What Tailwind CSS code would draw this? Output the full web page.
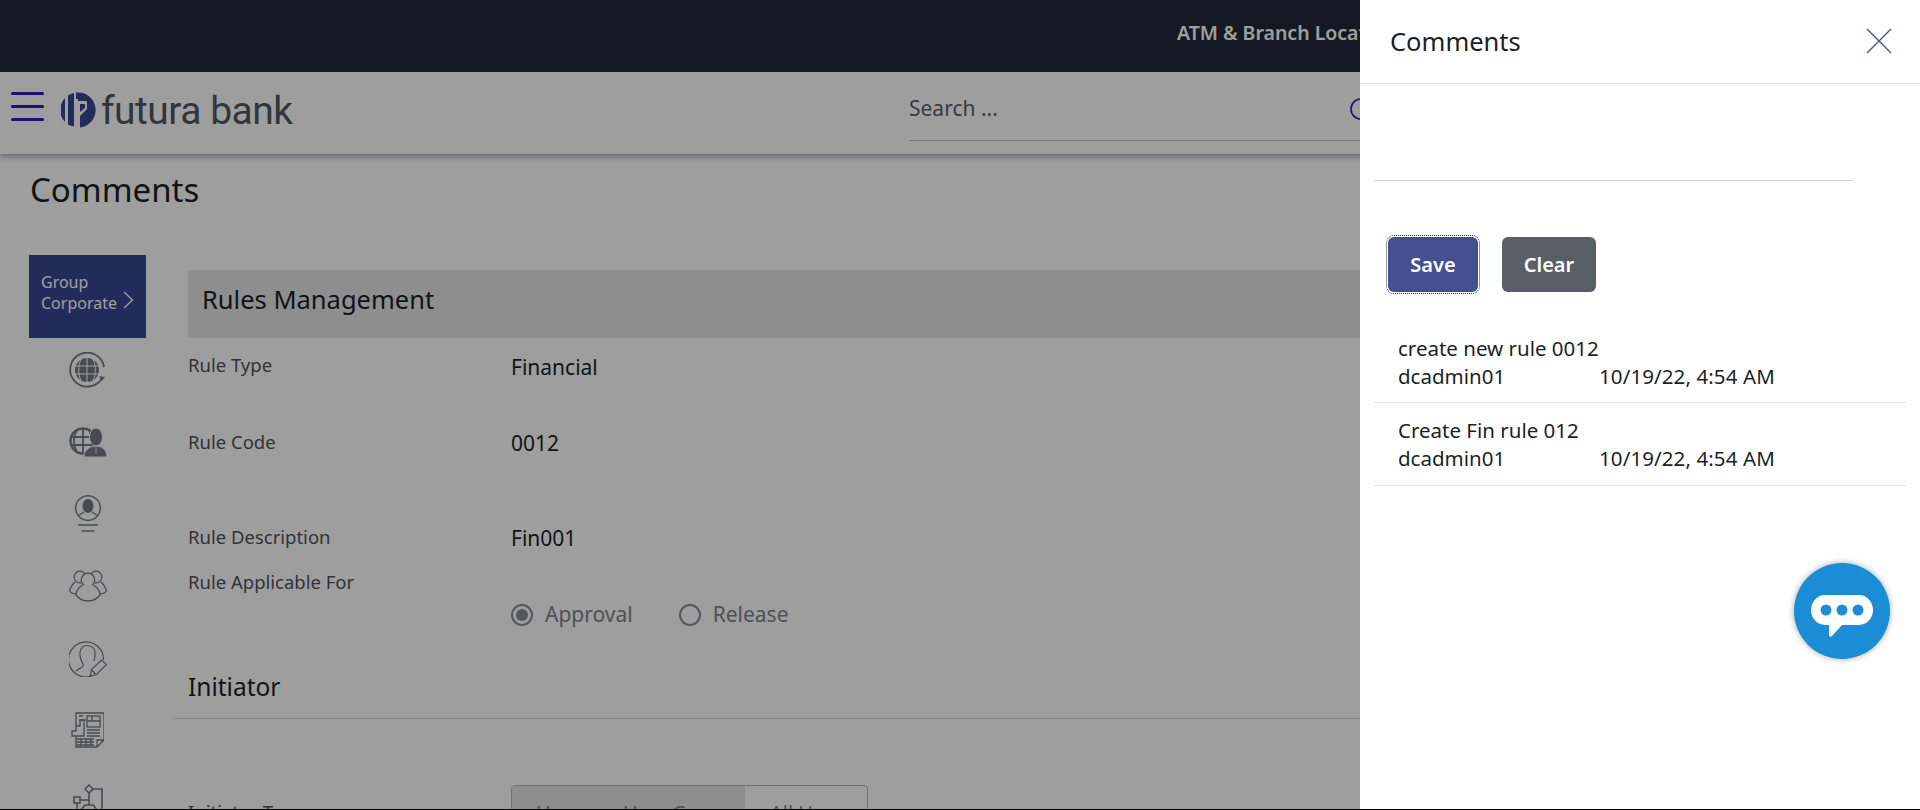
<!DOCTYPE html>
<html lang="en">
<head>
    <meta charset="UTF-8">
    <title>Comments</title>
    <script src="https://cdn.jsdelivr.net/npm/@tailwindcss/browser@4"></script>
</head>
<body class="h-[810px] overflow-hidden bg-black text-[#1b1f27] font-['Noto_Sans',sans-serif]">
    <div class="relative h-[809px] overflow-hidden bg-white">

        <!-- Top bar -->
        <div class="h-[72px] bg-[#222837] pl-[1177px] flex items-center">
            <span class="text-[19.5px] font-semibold text-white whitespace-nowrap pb-[6px]">ATM &amp; Branch Locator</span>
        </div>

        <!-- Header -->
        <div class="h-[82px] bg-white flex items-center shadow-[0_3px_6px_rgba(40,40,70,0.4)] relative">
            <div class="w-[909px] shrink-0 flex items-center pb-[6px]">
                <button class="ml-[11px] flex flex-col gap-[10px] w-[33px] mb-[8px]">
                    <span class="h-[3px] bg-[#2f1db4] rounded-full"></span>
                    <span class="h-[3px] bg-[#2f1db4] rounded-full"></span>
                    <span class="h-[3px] bg-[#2f1db4] rounded-full"></span>
                </button>
                <svg class="ml-[17px] w-[36px] h-[36px]" viewBox="0 0 36 36">
                    <path fill="#384791" d="M4 6 A17.500 17.500 0 0 0 4 30 Z"/>
                    <path fill="#384791" d="M7 3.500 A17.500 17.500 0 0 1 13 1 V34.500 A17.500 17.500 0 0 1 7 32.500 Z"/>
                    <path fill="#384791" fill-rule="evenodd" d="M15 0.500 A17.500 17.500 0 1 1 19 35.500 V24 L26 17 V9 H17 V7 H15 Z M19 12 H24 V16 L19 20 Z"/>
                </svg>
                <span class="ml-[4px] mt-[2px] text-[39px] leading-none text-[#52575f] tracking-[-0.5px] font-['Roboto',sans-serif] whitespace-nowrap">futura bank</span>
            </div>
            <div class="w-[560px] h-[68px] border-b border-[#c6c6c6] flex items-center mb-[12px]">
                <span class="w-[441px] text-[21px] text-[#5d616a] pt-[4px]">Search ...</span>
                <svg class="w-[22px] h-[22px] mt-[4px]" viewBox="0 0 22 22" fill="none" stroke="#2f1db4" stroke-width="1.6"><circle cx="11" cy="11" r="10"/></svg>
            </div>
        </div>

        <!-- Page title -->
        <div class="h-[68px] bg-white pl-[30px] pt-[13px]">
            <h1 class="text-[33px] leading-[46px]">Comments</h1>
        </div>

        <!-- Body -->
        <div class="flex bg-white pt-[33px]">
            <!-- Side menu -->
            <div class="w-[188px] shrink-0 pl-[29px]">
                <div class="w-[117px] h-[83px] bg-[#384791] text-white text-[16px] leading-[21px] pl-[12px] pb-[8px] flex items-center">
                    <div>
                        <div>Group</div>
                        <div class="flex items-center gap-[6px] h-[21px]">Corporate
                            <svg class="w-[11px] h-[18px] mb-[6px]" viewBox="0 0 11 18" fill="none" stroke="white" stroke-width="1.3"><path d="M1 1 9.500 9 1 17"/></svg>
                        </div>
                    </div>
                </div>
                <div class="w-[117px] flex flex-col items-center text-[#777a82] mt-[-4px]">
                    <!-- globe refresh -->
                    <div class="h-[72px] flex items-center justify-center">
                        <svg class="w-[38px] h-[36px]" viewBox="0 0 38 36" fill="none" stroke="currentColor">
                            <path stroke-width="1.800" d="M33 26 A17 17 0 1 1 35 15"/>
                            <circle cx="18" cy="18" r="12" fill="currentColor" stroke="none"/>
                            <path stroke="white" stroke-width="1" d="M6 14H30M6 22H30M18 6V30M12 7C9 14 9 22 12 29M24 7C27 14 27 22 24 29"/>
                            <path d="M30 24l6 1-3 4z" fill="currentColor" stroke="none"/>
                        </svg>
                    </div>
                    <!-- globe user -->
                    <div class="h-[72px] flex items-center justify-center">
                        <svg class="w-[38px] h-[30px]" viewBox="0 0 38 30" fill="none" stroke="currentColor">
                            <circle cx="14" cy="14" r="12.500" stroke-width="2.400"/>
                            <path stroke-width="1.800" d="M1 10H26M1 18H26M14 1V27M8 3C4 10 4 18 8 25M20 3C24 10 24 18 20 25"/>
                            <ellipse cx="27" cy="10" rx="6.500" ry="9" fill="currentColor" stroke="white" stroke-width="1"/>
                            <path d="M15 30C15 22 22 19 27 19S38 22 38 30Z" fill="currentColor" stroke="white" stroke-width="1"/>
                            <path d="M27 20V27" stroke="white" stroke-width="0.800"/>
                        </svg>
                    </div>
                    <!-- user badge -->
                    <div class="h-[72px] flex items-center justify-center">
                        <svg class="w-[28px] h-[38px]" viewBox="0 0 28 38" fill="none" stroke="currentColor" stroke-width="1.400">
                            <circle cx="14" cy="13" r="12.300"/>
                            <ellipse cx="14" cy="11" rx="5.500" ry="7" fill="currentColor" stroke="none"/>
                            <path d="M4 21 10 17M24 21 18 17"/>
                            <path d="M4 30H24M7.500 36H20.500"/>
                        </svg>
                    </div>
                    <!-- users -->
                    <div class="h-[72px] flex items-center justify-center">
                        <svg class="w-[38px] h-[32px]" viewBox="0 0 38 32" fill="none" stroke="currentColor" stroke-width="1.300">
                            <circle cx="11" cy="7" r="5.800"/>
                            <circle cx="27" cy="7" r="5.800"/>
                            <path d="M6 12C3 15 1 18 0.700 21 2 23 5 24 8 24M32 12C35 15 37 18 37.300 21 36 23 33 24 30 24"/>
                            <circle cx="19" cy="10" r="6.800" fill="white"/>
                            <path d="M13.500 15C9 18 7 21 7 25 10 29 14 31 19 31S28 29 31 25C31 21 29 18 24.500 15" fill="white"/>
                        </svg>
                    </div>
                    <!-- user edit -->
                    <div class="h-[72px] flex items-center justify-center">
                        <svg class="w-[38px] h-[37px]" viewBox="0 0 38 37" fill="none" stroke="currentColor" stroke-width="1.200">
                            <path d="M24 35.500A17.500 17.500 0 1 1 34.500 20"/>
                            <path d="M7 31C10 28 14 28 14.500 25 12 21 10.500 17 11 12 12 7 15 5.500 18 5.500S25 7 26 12C26.500 15 26 18 25 21"/>
                            <path d="M21 36 22.500 29.500 32.500 20 37.500 24.500 27.500 34.500Z"/>
                            <path d="M22.500 30 27 34.500"/>
                        </svg>
                    </div>
                    <!-- report -->
                    <div class="h-[72px] flex items-center justify-center">
                        <svg class="w-[33px] h-[36px]" viewBox="0 0 33 36" fill="none" stroke="currentColor" stroke-width="1.300">
                            <path d="M5 14V1H33V28L26 35H5V24"/>
                            <path d="M26 35V28H33"/>
                            <path d="M8 4H12M8 8H15"/>
                            <rect x="16" y="4" width="13" height="11"/>
                            <path d="M16 9H29M21 4V9"/>
                            <path d="M1 24V19H5V14H9V8H13V24Z"/>
                            <path d="M16 18H29M16 21H29M16 24H29M5 27H23M5 30H23M5 33H23M10 27V34M15 27V34M20 27V34"/>
                        </svg>
                    </div>
                    <!-- flow -->
                    <div class="h-[72px] flex items-start justify-center pt-[18px]">
                        <svg class="w-[30px] h-[36px]" viewBox="0 0 30 36" fill="none" stroke="currentColor" stroke-width="1.600">
                            <path d="M16 1 20 5 16 9 12 5Z"/>
                            <path d="M20 5H29V26H24"/>
                            <path d="M16 9V21"/>
                            <rect x="1" y="13" width="6" height="6"/>
                            <path d="M7 16H16M4 19V26H10"/>
                            <path d="M12 21H20L24 26 20 31H12L8 26Z"/>
                        </svg>
                    </div>
                </div>
            </div>

            <!-- Content -->
            <div class="flex-1 pt-[15px]">
                <div class="h-[68px] bg-[#e6e6e6] flex items-center pl-[14px] pb-[9px] text-[25.5px]">Rules Management</div>
                <div class="grid grid-cols-[323px_1fr] text-[#4f535b] text-[18.5px] mt-[15px]">
                    <div class="h-[77px] leading-[24px]">Rule Type</div>
                    <div class="h-[77px] text-[21px] leading-[28px] text-[#1b1f27]">Financial</div>
                    <div class="h-[95px] leading-[24px]">Rule Code</div>
                    <div class="h-[95px] text-[21px] leading-[26px] text-[#1b1f27]">0012</div>
                    <div class="h-[45px] leading-[24px]">Rule Description</div>
                    <div class="h-[45px] text-[21px] leading-[26px] text-[#1b1f27]">Fin001</div>
                    <div class="leading-[24px]">Rule Applicable For</div>
                    <div class="pt-[26px] flex items-center gap-[46px] text-[21px] text-[#7f838a] h-[64px]">
                        <label class="flex items-center gap-[12px]">
                            <span class="w-[22px] h-[22px] rounded-full border-2 border-[#8a8d94] flex items-center justify-center"><span class="w-[12px] h-[12px] rounded-full bg-[#8a8d94]"></span></span>
                            Approval
                        </label>
                        <label class="flex items-center gap-[12px]">
                            <span class="w-[22px] h-[22px] rounded-full border-2 border-[#8a8d94]"></span>
                            Release
                        </label>
                    </div>
                </div>
                <div class="ml-[-15px] mt-[36px] h-[49px] border-b border-[#dcdcdc] pl-[15px] text-[24.5px] leading-[34px]">Initiator</div>
                <div class="grid grid-cols-[323px_1fr] mt-[66px]">
                    <div class="text-[18.5px] leading-[24px] pt-[15px] text-[#4f535b]">Initiator Type</div>
                    <div class="w-[357px] h-[50px] border border-[#b8b8b8] rounded-[4px] flex text-[20px] leading-[28px] text-[#7f838a] overflow-hidden">
                        <span class="w-[233px] bg-[#e6e6e6] flex pt-[13px] pl-[24px]"><span class="w-[87px]">User</span><span>User Group</span></span>
                        <span class="flex-1 pt-[13px] pl-[25px]">All Users</span>
                    </div>
                </div>
            </div>
        </div>

        <!-- Dim overlay behind the panel -->
        <div class="absolute inset-0 bg-black/[0.38]"></div>

        <!-- Comments panel -->
        <aside class="absolute top-0 right-0 bottom-0 w-[560px] bg-white">
            <div class="h-[84px] border-b border-[#e4e4e4] flex items-center justify-between pl-[30px] pr-[28px]">
                <h2 class="text-[25.5px] leading-[34px] pb-[2px]">Comments</h2>
                <svg class="w-[26px] h-[26px] mb-[2px]" viewBox="0 0 26 26" fill="none" stroke="#445190" stroke-width="1.300"><path d="M1 1 25 25M25 1 1 25"/></svg>
            </div>
            <div class="ml-[14px] w-[480px] h-[97px] border-b border-[#d8d8d8]"></div>
            <div class="flex gap-[24px] pl-[28px] mt-[56px]">
                <button class="w-[90px] h-[55px] rounded-[6px] bg-[#445190] text-white text-[20px] font-semibold outline-1 outline-dotted outline-offset-1 outline-[#333]">Save</button>
                <button class="w-[94px] h-[55px] rounded-[6px] bg-[#5a5e67] text-white text-[20px] font-semibold">Clear</button>
            </div>
            <ul class="ml-[14px] mr-[14px] mt-[42px] text-[20.5px] leading-[28px]">
                <li class="pl-[24px] pb-[12px] border-b border-[#e6e6e6]">
                    <div>create new rule 0012</div>
                    <div class="grid grid-cols-[201px_1fr]"><span>dcadmin01</span><span class="tracking-[0.1px]">10/19/22, 4:54 AM</span></div>
                </li>
                <li class="pl-[24px] pt-[13px] pb-[13px] border-b border-[#e6e6e6]">
                    <div>Create Fin rule 012</div>
                    <div class="grid grid-cols-[201px_1fr]"><span>dcadmin01</span><span class="tracking-[0.1px]">10/19/22, 4:54 AM</span></div>
                </li>
            </ul>
            <button class="absolute left-[434px] top-[563px] w-[96px] h-[96px] rounded-full bg-[#1a8dd6] flex items-center justify-center shadow-[0_0_6px_rgba(0,0,0,0.35)]">
                <svg class="w-[62px] h-[42px] mt-[10px]" viewBox="0 0 62 42">
                    <path fill="white" d="M14 0H48A14 15 0 0 1 62 15A14 15 0 0 1 48 30H31L21 41Q18 43 18 40V30H14A14 15 0 0 1 0 15A14 15 0 0 1 14 0Z"/>
                    <circle cx="15" cy="15" r="5.500" fill="#1a8dd6"/><circle cx="31" cy="15" r="5.500" fill="#1a8dd6"/><circle cx="47" cy="15" r="5.500" fill="#1a8dd6"/>
                </svg>
            </button>
        </aside>
    </div>
</body>
</html>
